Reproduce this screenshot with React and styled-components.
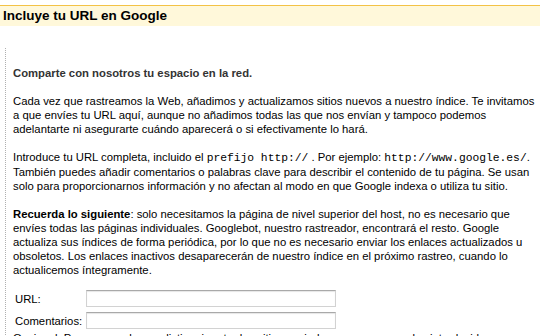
import React from 'react';
import styled, { createGlobalStyle } from 'styled-components';

const GlobalStyle = createGlobalStyle`
    body {
        margin: 0;
        background: #fff;
        font-family: "Liberation Sans", Arial, Helvetica, sans-serif;
        color: #000;
        overflow: hidden;
    }
`;

const TitleBar = styled.div`
    margin-top: 5px;
    border-top: 1px solid #f3c246;
    background: #fff8da;
    height: 20px;
    padding-left: 3px;
`;

const Title = styled.h1`
    margin: 0;
    font-size: 13.5px;
    font-weight: bold;
    line-height: 20px;
    color: #000;
`;

const Content = styled.div`
    margin: 22px 0 0 5px;
    border-left: 1px dotted #b0b0b0;
    padding: 18px 0 0 7px;
    font-size: 11.3px;
    line-height: 14px;
`;

const Lead = styled.p`
    margin: 0 0 14px;
    font-weight: bold;
    color: #333;
`;

const Para = styled.p`
    margin: 0 0 14px;
    white-space: nowrap;
`;

const Code = styled.code`
    font-family: "Liberation Mono", "Courier New", monospace;
    font-size: 11.3px;
`;

const Form = styled.div`
    display: grid;
    grid-template-columns: 71px 250px;
    row-gap: 5px;
    margin-top: -1px;
    padding-left: 2px;
    align-items: center;
`;

const Label = styled.label`
    font-size: 11.3px;
`;

const Field = styled.input`
    box-sizing: border-box;
    width: 250px;
    height: 17px;
    margin: 0;
    border: 1px solid #d2d2d2;
    border-top-color: #a9a9a9;
    box-shadow: inset 0 1px 1px #e6e6e6;
    background: #fff;
    font-size: 11px;
`;

const Note = styled.p`
    margin: 2px 0 0;
    white-space: nowrap;
`;

function App() {
    return (
        <>
            <GlobalStyle />
            <TitleBar>
                <Title>Incluye tu URL en Google</Title>
            </TitleBar>
            <Content>
                <Lead>Comparte con nosotros tu espacio en la red.</Lead>
                <Para>
                    Cada vez que rastreamos la Web, añadimos y actualizamos sitios nuevos a nuestro índice. Te invitamos<br />
                    a que envíes tu URL aquí, aunque no añadimos todas las que nos envían y tampoco podemos<br />
                    adelantarte ni asegurarte cuándo aparecerá o si efectivamente lo hará.
                </Para>
                <Para>
                    Introduce tu URL completa, incluido el <Code>prefijo http://</Code> . Por ejemplo: <Code>http://www.google.es/</Code>.<br />
                    También puedes añadir comentarios o palabras clave para describir el contenido de tu página. Se usan<br />
                    solo para proporcionarnos información y no afectan al modo en que Google indexa o utiliza tu sitio.
                </Para>
                <Para>
                    <b>Recuerda lo siguiente</b>: solo necesitamos la página de nivel superior del host, no es necesario que<br />
                    envíes todas las páginas individuales. Googlebot, nuestro rastreador, encontrará el resto. Google<br />
                    actualiza sus índices de forma periódica, por lo que no es necesario enviar los enlaces actualizados u<br />
                    obsoletos. Los enlaces inactivos desaparecerán de nuestro índice en el próximo rastreo, cuando lo<br />
                    actualicemos íntegramente.
                </Para>
                <Form>
                    <Label>URL:</Label>
                    <Field type="text" />
                    <Label>Comentarios:</Label>
                    <Field type="text" />
                </Form>
                <Note>
                    Opcional: Para que podamos distinguir entre los sitios enviados por personas y los introducidos
                </Note>
            </Content>
        </>
    );
}

export default App;
